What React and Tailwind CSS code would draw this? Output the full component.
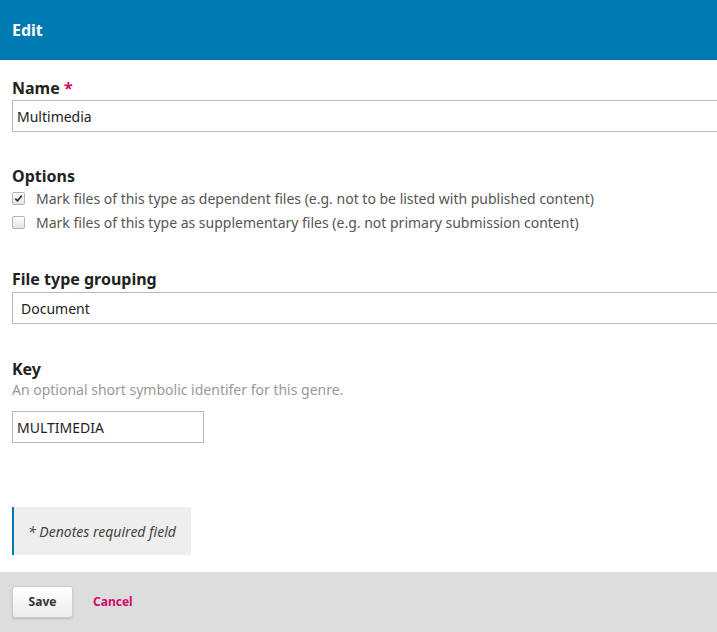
const Checkbox = ({ checked }) => (
  <span className="flex h-[13px] w-[13px] shrink-0 items-center justify-center rounded-[2px] border border-[#b4b4b4] bg-gradient-to-b from-[#fdfdfd] to-[#e4e4e4]">
    {checked && (
      <svg width="9" height="9" viewBox="0 0 9 9">
        <path d="M1.3 4.6 L3.5 6.8 L7.8 1.6" fill="none" stroke="#333" strokeWidth="1.7" />
      </svg>
    )}
  </span>
);

const options = [
  { label: 'Mark files of this type as dependent files (e.g. not to be listed with published content)', checked: true },
  { label: 'Mark files of this type as supplementary files (e.g. not primary submission content)', checked: false },
];

export default function App() {
  return (
    <div className="h-[632px] w-[717px] overflow-hidden bg-white font-['Noto_Sans',sans-serif] text-[#222]">
      <header className="flex h-[60px] items-center bg-[#007ab2] px-3">
        <h1 className="text-[16px] font-bold text-white">Edit</h1>
      </header>

      <form className="flex h-[512px] flex-col px-3">
        <label className="mb-0.5 mt-[18px] text-[16px] font-bold leading-5">
          Name <span className="text-[#d00a6c]">*</span>
        </label>
        <div className="flex h-8 w-[720px] items-center border border-[#bbb] px-1 text-[14px]">Multimedia</div>

        <p className="mt-[34px] text-[16px] font-bold leading-5">Options</p>
        {options.map((option) => (
          <div key={option.label} className="flex h-6 items-center gap-[11px] text-[14px] text-[#555]">
            <Checkbox checked={option.checked} />
            <span>{option.label}</span>
          </div>
        ))}

        <label className="mt-[35px] text-[16px] font-bold leading-5">File type grouping</label>
        <div className="mt-[3px] flex h-8 w-[720px] items-center border border-[#bbb] px-2 text-[14px]">Document</div>

        <label className="mt-[35px] text-[16px] font-bold leading-5">Key</label>
        <p className="mt-0.5 text-[14px] leading-[18px] text-[#999]">An optional short symbolic identifer for this genre.</p>
        <div className="mt-3 flex h-8 w-[192px] items-center border border-[#bbb] px-1 text-[14px]">MULTIMEDIA</div>

        <div className="mt-16 flex h-12 w-[179px] items-center border-l-2 border-[#007ab2] bg-[#eee] pl-[14px] text-[14px] italic text-[#444]">
          * Denotes required field
        </div>
      </form>

      <footer className="flex h-[60px] items-center gap-5 bg-[#ddd] px-3">
        <button type="button" className="h-8 w-[61px] rounded-[3px] border border-[#ccc] bg-gradient-to-b from-white to-[#ececec] text-[12px] font-bold text-[#333] shadow-[0_1px_2px_rgba(0,0,0,0.15)]">
          Save
        </button>
        <button type="button" className="text-[12px] font-bold text-[#d00a6c]">Cancel</button>
      </footer>
    </div>
  );
}
